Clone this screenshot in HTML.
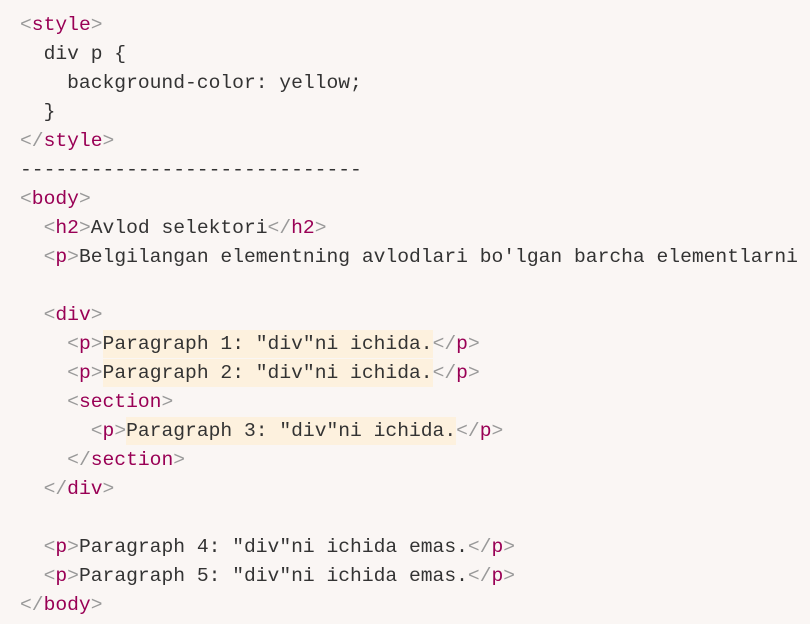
<!DOCTYPE html>
<html><head><style>
html,body{margin:0;padding:0;background:#faf6f4;width:810px;height:624px;overflow:hidden}
pre{margin:0;padding:11px 0 0 20px;font-family:"Liberation Mono",monospace;font-size:19.65px;line-height:29px;color:#333}
.t{color:#905}.b{color:#999}
.h{background:#fdf1de;padding:3px 0}
</style></head><body><pre><span class="b">&lt;</span><span class="t">style</span><span class="b">&gt;</span>
  div p {
    background-color: yellow;
  }
<span class="b">&lt;/</span><span class="t">style</span><span class="b">&gt;</span>
-----------------------------
<span class="b">&lt;</span><span class="t">body</span><span class="b">&gt;</span>
  <span class="b">&lt;</span><span class="t">h2</span><span class="b">&gt;</span>Avlod selektori<span class="b">&lt;/</span><span class="t">h2</span><span class="b">&gt;</span>
  <span class="b">&lt;</span><span class="t">p</span><span class="b">&gt;</span>Belgilangan elementning avlodlari bo'lgan barcha elementlarni

  <span class="b">&lt;</span><span class="t">div</span><span class="b">&gt;</span>
    <span class="b">&lt;</span><span class="t">p</span><span class="b">&gt;</span><span class="h">Paragraph 1: "div"ni ichida.</span><span class="b">&lt;/</span><span class="t">p</span><span class="b">&gt;</span>
    <span class="b">&lt;</span><span class="t">p</span><span class="b">&gt;</span><span class="h">Paragraph 2: "div"ni ichida.</span><span class="b">&lt;/</span><span class="t">p</span><span class="b">&gt;</span>
    <span class="b">&lt;</span><span class="t">section</span><span class="b">&gt;</span>
      <span class="b">&lt;</span><span class="t">p</span><span class="b">&gt;</span><span class="h">Paragraph 3: "div"ni ichida.</span><span class="b">&lt;/</span><span class="t">p</span><span class="b">&gt;</span>
    <span class="b">&lt;/</span><span class="t">section</span><span class="b">&gt;</span>
  <span class="b">&lt;/</span><span class="t">div</span><span class="b">&gt;</span>

  <span class="b">&lt;</span><span class="t">p</span><span class="b">&gt;</span>Paragraph 4: "div"ni ichida emas.<span class="b">&lt;/</span><span class="t">p</span><span class="b">&gt;</span>
  <span class="b">&lt;</span><span class="t">p</span><span class="b">&gt;</span>Paragraph 5: "div"ni ichida emas.<span class="b">&lt;/</span><span class="t">p</span><span class="b">&gt;</span>
<span class="b">&lt;/</span><span class="t">body</span><span class="b">&gt;</span></pre></body></html>
